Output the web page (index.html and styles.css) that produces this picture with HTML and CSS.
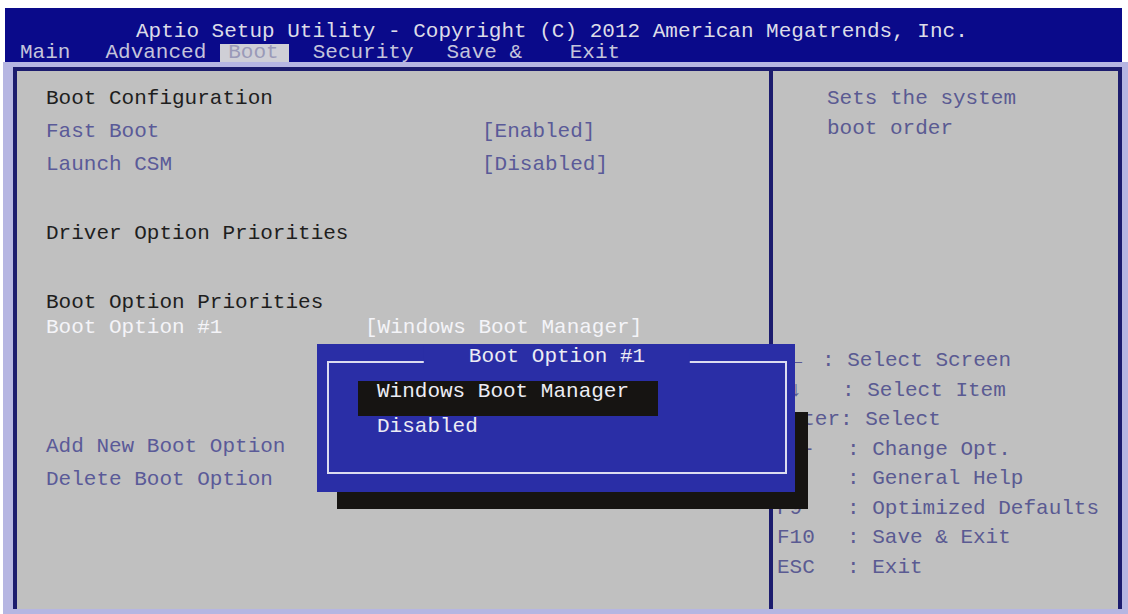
FILE: index.html
```html
<!DOCTYPE html>
<html lang="en">

<head>
    <meta charset="UTF-8">
    <meta name="viewport" content="width=device-width, initial-scale=1.0">
    <title>Aptio Setup Utility</title>
    <link rel="stylesheet" href="styles.css">
</head>

<body>
    <div class="screen">
        <!-- top bar -->
        <div class="header">
            <div class="title">Aptio Setup Utility - Copyright (C) 2012 American Megatrends, Inc.</div>
            <div class="menu">
                <span class="tab">Main</span>
                <span class="tab tab-adv">Advanced</span>
                <span class="tab tab-boot">Boot</span>
                <span class="tab tab-sec">Security</span>
                <span class="tab tab-save">Save &amp; <span class="tab-exit">Exit</span></span>
            </div>
        </div>

        <div class="frame">
            <!-- left: settings -->
            <div class="main-panel">
                <div class="row head">Boot Configuration</div>
                <div class="row item sp"><span class="lbl">Fast Boot</span><span>[Enabled]</span></div>
                <div class="row item sp"><span class="lbl">Launch CSM</span><span>[Disabled]</span></div>
                <div class="row head gap">Driver Option Priorities</div>
                <div class="row head gap">Boot Option Priorities</div>
                <div class="row item selected near"><span class="lbl lbl-short">Boot Option #1</span><span>[Windows Boot Manager]</span></div>
                <div class="row item far">Add New Boot Option</div>
                <div class="row item sp">Delete Boot Option</div>
            </div>

            <!-- right: help -->
            <div class="help-panel">
                <div class="desc">
                    <div>Sets the system</div>
                    <div>boot order</div>
                </div>
                <div class="keys">
                    <div class="key-row"><span class="key key-a">→←</span><span>: Select Screen</span></div>
                    <div class="key-row"><span class="key key-b">↑↓</span><span>: Select Item</span></div>
                    <div class="key-row"><span class="key key-enter">Enter</span><span>: Select</span></div>
                    <div class="key-row"><span class="key">+/-</span><span>: Change Opt.</span></div>
                    <div class="key-row"><span class="key">F1</span><span>: General Help</span></div>
                    <div class="key-row"><span class="key">F9</span><span>: Optimized Defaults</span></div>
                    <div class="key-row"><span class="key">F10</span><span>: Save &amp; Exit</span></div>
                    <div class="key-row"><span class="key">ESC</span><span>: Exit</span></div>
                </div>
            </div>
        </div>

        <!-- popup dialog -->
        <div class="popup-shadow"></div>
        <div class="popup">
            <div class="popup-box">
                <span class="popup-title">Boot Option #1</span>
                <div class="opt sel">Windows Boot Manager</div>
                <div class="opt">Disabled</div>
            </div>
        </div>
    </div>
</body>

</html>
```

FILE: styles.css
```css
/* base */
body {
    margin: 0;
    background: #fff;
    font-family: "Liberation Mono", "DejaVu Sans Mono", monospace;
    font-size: 21px;
}

.screen {
    position: relative;
    height: 614px;
    padding-top: 8px;
    box-sizing: border-box;
    display: flex;
    flex-direction: column;
    overflow: hidden;
}

/* header */
.header {
    height: 54px;
    margin: 0 6px 0 5px;
    padding-top: 12px;
    box-sizing: border-box;
    background: #0a0a8a;
    color: #dcdce8;
}

.title {
    line-height: 24px;
    padding-left: 131px;
    white-space: nowrap;
}

.menu {
    display: flex;
    height: 18px;
    line-height: 18px;
    padding-left: 15px;
    color: #c4c4dc;
    white-space: pre;
}

.tab-adv { margin-left: 35px; }
.tab-sec { margin-left: 24px; }
.tab-save { margin-left: 33px; }
.tab-exit { margin-left: 35px; }

.tab-boot {
    margin-left: 14px;
    padding: 0 10px 0 8px;
    background: #cfcfd6;
    color: #9a9ab8;
}

/* panels */
.frame {
    flex: 1;
    display: flex;
    margin-left: 3px;
    padding: 5px 6px 5px 10px;
    background: #b6b6e2;
}

.main-panel {
    width: 756px;
    box-sizing: border-box;
    border-left: 4px solid #1c1c6e;
    border-top: 4px solid #1c1c6e;
    background: #c0c0c0;
    padding: 16px 0 0 29px;
}

.row {
    display: flex;
    line-height: 24px;
    white-space: pre;
}

.row.sp { margin-top: 9px; }
.row.gap { margin-top: 45px; }
.row.near { margin-top: 1px; }
.row.far { margin-top: 95px; }

.head { color: #1e1e1e; }
.item { color: #5a5a98; }
.item.selected { color: #f4f4f8; }

.lbl { width: 436px; }
.lbl-short { width: 319px; }

.help-panel {
    flex: 1;
    border-left: 4px solid #1c1c6e;
    border-top: 4px solid #1c1c6e;
    border-right: 4px solid #1c1c6e;
    background: #c0c0c0;
    color: #5a5a92;
}

.desc {
    margin-left: 54px;
    padding-top: 13px;
    line-height: 30px;
}

.keys {
    margin-top: 202px;
    padding-left: 4px;
    line-height: 29.5px;
}

.key-row {
    display: flex;
    white-space: pre;
}

.key { width: 70px; }
.key-a { width: 45px; }
.key-b { width: 65px; }
.key-enter { width: 63px; }

/* popup */
.popup-shadow {
    position: absolute;
    left: 337px;
    top: 412px;
    width: 471px;
    height: 97px;
    background: #161412;
}

.popup {
    position: absolute;
    left: 317px;
    top: 344px;
    width: 478px;
    height: 148px;
    box-sizing: border-box;
    padding: 17px 8px 18px 10px;
    background: #2a2ea6;
    color: #ececf4;
}

.popup-box {
    position: relative;
    height: 100%;
    box-sizing: border-box;
    border: 2px solid #dcdcf0;
    padding: 18px 0 0 29px;
}

.popup-title {
    position: absolute;
    top: -17px;
    left: 50%;
    transform: translateX(-50%);
    padding: 0 45px;
    line-height: 22px;
    background: #2a2ea6;
    white-space: nowrap;
}

.opt {
    line-height: 22px;
    padding-left: 19px;
    white-space: pre;
}

.opt.sel {
    width: 300px;
    box-sizing: border-box;
    padding-bottom: 13px;
    background: #161412;
}
```
